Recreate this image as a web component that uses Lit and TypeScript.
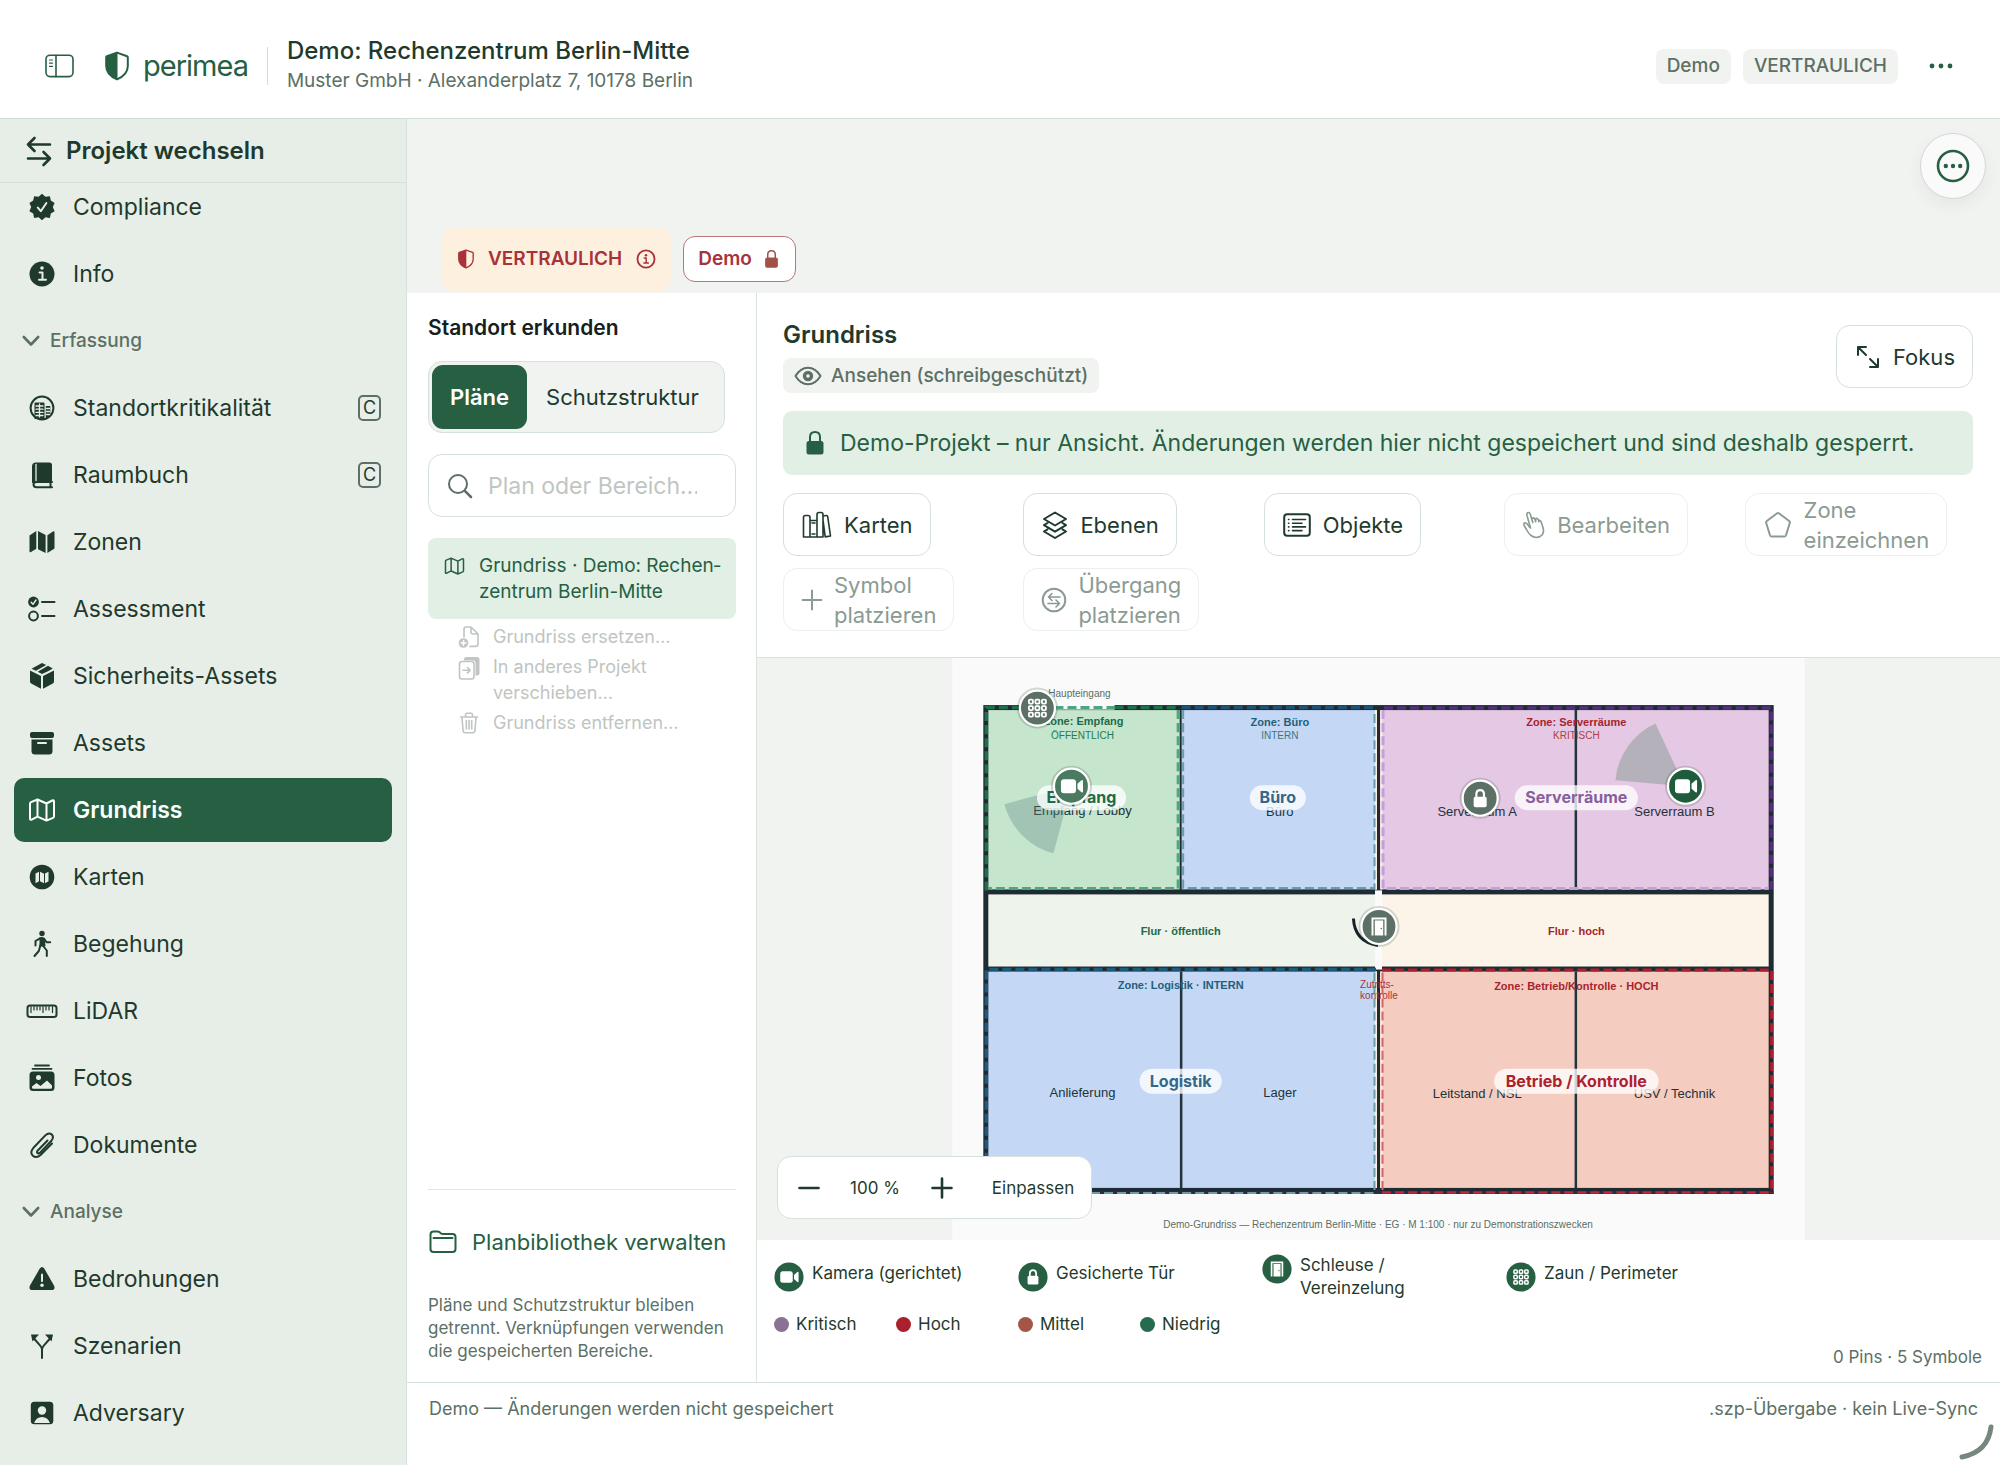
import { LitElement, html, svg, css, nothing, SVGTemplateResult } from "lit";
import { customElement, property } from "lit/decorators.js";
import { classMap } from "lit/directives/class-map.js";

type Glyph = { w: number; h: number; body: SVGTemplateResult };

const glyphs: Record<string, Glyph> = {
  sidebar: { w: 30, h: 24, body: svg`<rect x="2" y="1.2" width="27" height="21.4" rx="4" class="s"/><path class="s" d="M12 1.2v21.4"/><path class="t" d="M5.5 6h3M5.5 9.2h3M5.5 12.4h3"/>` },
  shield: { w: 24, h: 30, body: svg`<path class="m" d="M12 1.6 22 5.2a1.2 1.2 0 0 1 .8 1.2V15c0 6.6-5.2 11-10.8 13.4C6.400 26 1.200 21.600 1.200 15V6.400A1.200 1.200 0 0 1 2 5.200Z"/><path class="f" d="M12.500 1.500V28.300C6.400 26 1.200 21.600 1.200 15V6.400A1.200 1.200 0 0 1 2 5.200Z"/>` },
  swap: { w: 26, h: 30, body: svg`<path class="b" d="M24 8.500H2M8.500 2 2 8.500 8.500 15M2 22.500h22M17.500 16l6.500 6.500-6.500 6.500"/>` },
  seal: { w: 28, h: 28, body: svg`<path class="f" d="m14 .8 3.400 3 4.500-.6.9 4.400 3.800 2.400-1.800 4 1.800 4.200-3.800 2.300-.9 4.400-4.500-.6-3.400 3-3.400-3-4.500.6-.9-4.400-3.800-2.300L3.200 14l-1.800-4 3.800-2.400.9-4.400 4.500.6Z"/><path class="cut" d="m9.800 14.600 3 3.600 5.600-8.200"/>` },
  infoFill: { w: 28, h: 28, body: svg`<circle class="f" cx="14" cy="14" r="12.500"/><circle class="cf" cx="14" cy="8" r="1.800"/><path class="cut" d="M11.500 12.500H14.500V19.500M11 19.800h7"/>` },
  info: { w: 22, h: 22, body: svg`<circle class="m" cx="11" cy="11" r="9.400"/><circle class="f" cx="11" cy="6.800" r="1.400"/><path class="s" d="M9 10h2.200v5M8.600 15.300h5"/>` },
  chevron: { w: 18, h: 12, body: svg`<path class="b" d="m1.800 2 7.200 7.500L16.200 2"/>` },
  city: { w: 28, h: 28, body: svg`<circle class="m" cx="14" cy="14" r="11.400"/><path class="f" d="M6.500 9.500q0-1 1-1h8q1 0 1 1V25h-10ZM17.800 12h4.500v11l-4.500 2Z"/><path class="grid" d="M8 12h7M8 15.200h7M8 18.400h7M8 21.500h7M11.500 10v13M18.600 14.500h3M18.600 17.500h3M18.600 20.500h3"/>` },
  book: { w: 28, h: 28, body: svg`<path class="f" d="M8 1.500h13.500q2.500 0 2.500 2.500v17H8q-2 0-2.300.8L4 22V5.500q0-4 4-4Z"/><path class="m" d="M24 21H8.500q-3 0-3 2.600 0 2.600 3 2.600H24M22.500 21v5"/><path class="grid" d="M8 3.500v16"/>` },
  mapFill: { w: 28, h: 28, body: svg`<path class="f" d="M1.500 7.500 8.300 3v17.800L3 24q-1.500.8-1.500-.8ZM10 3l7.600 4v18L10 21.200ZM19.400 7.200 25 3.500q1.500-.8 1.500.8v16.200l-7.100 4.600Z"/>` },
  map: { w: 28, h: 24, body: svg`<path class="m" d="M2 5.800q0-1.200 1-1.700L9.500 1.500l9 4 5.800-3q1.700-.7 1.700 1v14.700q0 1.100-1 1.600l-6.500 2.800-9-4-5.800 3q-1.700.7-1.700-1ZM9.500 1.700v16.700M18.500 5.500v17"/>` },
  checklist: { w: 30, h: 28, body: svg`<circle class="f" cx="6.500" cy="7" r="5.400"/><path class="cut thin" d="m4.200 7.300 1.800 2 3-4.300"/><circle class="m" cx="6.500" cy="21" r="4.400"/><path class="m" d="M15 7h12.500M15 21h12.500"/>` },
  box: { w: 28, h: 28, body: svg`<path class="f" d="m14 1 4.200 2L8 8.800 3.500 6.800ZM20 3.800l4.800 2.800L20 9.200 14 12l-4.300-2.200ZM2 8.600l11 5.400v12.800L3.200 21.500Q2 20.800 2 19.500ZM26 8.600 15 14v12.800l9.800-5.300q1.200-.7 1.200-2Z"/>` },
  archive: { w: 28, h: 28, body: svg`<rect class="f" x="2" y="3" width="24" height="6" rx="2"/><path class="f" d="M3.500 10.500h21V22q0 3.500-3.500 3.500H7q-3.500 0-3.500-3.500Z"/><path class="cut" d="M10 14h8"/>` },
  mapRound: { w: 28, h: 28, body: svg`<circle class="f" cx="14" cy="14" r="12.300"/><path class="cf" d="M7.500 10.500 11 8.700v9.600l-3.500 1.900ZM12 8.700l4 2v9.600l-4-2ZM17 10.600l3.500-1.900v9.600L17 20.200Z"/>` },
  walk: { w: 28, h: 28, body: svg`<circle class="f" cx="14" cy="3.500" r="2.700"/><path class="f" d="M11.500 7.500q3-1.500 5 .8l1 8-6 .5Z"/><path class="m" d="M12 8.300 7.500 11v4.500M16 8.500l2.500 3.700h3.700M12.500 15l-1.700 6L6.500 26M14.800 15.500l4 5V26"/>` },
  ruler: { w: 32, h: 28, body: svg`<rect class="m" x="1.500" y="8.500" width="29" height="11.500" rx="2.500"/><path class="t" d="M5 9.500v6M8 9.500v3.500M11 9.500v3.500M14 9.500v3.500M17 9.500v6M20 9.500v3.500M23 9.500v3.500M26.500 9.500v6"/>` },
  photos: { w: 28, h: 28, body: svg`<path class="t2" d="M7 1.500h14M4.500 4.800h19"/><rect class="f" x="1.500" y="7.500" width="25" height="19.500" rx="3.500"/><circle class="cf" cx="10.500" cy="13.500" r="2.500"/><path class="cf" d="M4 22.500 8.500 19l4 3 6.500-5.500 5 5v2q0 1.300-1.300 1.300H5.300Q4 24.800 4 23.500Z"/>` },
  clip: { w: 28, h: 28, body: svg`<path class="m" d="M19.500 9.500 10 19.200q-1.800 1.800-.4 2.900 1.200.8 2.700-.7L23.200 10q3.200-3.600.6-6.500-3-2.500-6.500.9L5.500 16.800q-4 4.500-.7 8 3.700 3 8-1L24 12.500"/>` },
  warn: { w: 28, h: 28, body: svg`<path class="f" d="M11.600 3.800q2.400-3.600 4.800 0L26 20.500q1.800 4.200-2.500 4.500h-19Q.2 24.700 2 20.500Z"/><path class="cut" d="M14 9.500v6.500"/><circle class="cf" cx="14" cy="20.200" r="1.700"/>` },
  fork: { w: 28, h: 28, body: svg`<path class="m" d="M14 26v-8.500q0-2-2-4.200L6 6.500M14 17.500q0-2 2-4.200l6-6.800"/><path class="f" d="M3 2.500h8L4.500 9.500ZM25 2.500h-8l6.500 7Z"/>` },
  person: { w: 28, h: 28, body: svg`<rect class="f" x="2.800" y="2.800" width="22.500" height="22.500" rx="3.500"/><circle class="cf" cx="14" cy="11.500" r="4.200"/><path class="cf" d="M6 24q2.300-6 8-6t8 6Z"/>` },
  search: { w: 26, h: 26, body: svg`<circle class="m" cx="11" cy="11" r="9"/><path class="b" d="m17.800 17.800 6.200 6.200"/>` },
  docAdd: { w: 22, h: 22, body: svg`<path class="s" d="M6 11V3q0-2 2-2h5l7 7v10q0 2.400-2.400 2.400H12M13 1v5q0 2 2 2h5"/><circle class="f" cx="5.500" cy="17" r="4.800"/><path class="wc" d="M5.500 14.500v5M3 17h5"/>` },
  docMove: { w: 22, h: 24, body: svg`<path class="f" d="M6 3.500Q6 1 8.500 1H19q2.500 0 2.500 2.500V17q0 2.500-2.500 2.500h-1.500V7q0-2.500-2.500-2.500H6Z"/><rect class="s" x="1.500" y="5.500" width="14.500" height="17.500" rx="2.500"/><path class="s" d="M5 14.200h7M9.500 11.500l2.700 2.700-2.700 2.700"/>` },
  trash: { w: 22, h: 22, body: svg`<path class="s" d="M2.500 5h17M7.500 4.800V3q0-1.700 1.700-1.700h3.600q1.700 0 1.700 1.700v1.800M4 5.200l1 13.300q.2 2.200 2.400 2.200h7.200q2.200 0 2.400-2.200L18 5.200M8.300 8.500V17M11 8.500V17M13.700 8.500V17"/>` },
  folder: { w: 28, h: 24, body: svg`<path class="m" d="M1.500 4.500q0-3 3-3h4q1.300 0 2.200.8l1 .9q.9.800 2.200.800h9.600q3 0 3 3V19q0 3-3 3h-19q-3 0-3-3ZM4.500 8h19"/>` },
  eye: { w: 28, h: 20, body: svg`<path class="m" d="M1.500 10Q6.500 1.700 14 1.700T26.500 10Q21.500 18.300 14 18.300T1.500 10Z"/><circle class="ring" cx="14" cy="10" r="3.500"/>` },
  lock: { w: 20, h: 26, body: svg`<rect class="f" x="1.500" y="11" width="17" height="13.500" rx="2.500"/><path class="m" d="M5 11V7q0-5 5-5t5 5v4"/>` },
  expand: { w: 26, h: 26, body: svg`<path class="m" d="m3 3 8 8M3 11V3h8M23 23l-8-8M23 15v8h-8"/>` },
  books: { w: 30, h: 28, body: svg`<path class="s" d="M1.500 26V6.500q0-2 2-2H6q2 0 2 2V26ZM8 9.500h7V26M1.500 26h19.300M15 26V3.500q0-2 2-2h2q2 0 2 2V26M21 5l3.200-.5q1.300-.1 1.500 1.200L28.500 25l-5.300.9L21 9M10 12h3M10 23h3"/>` },
  layers: { w: 26, h: 28, body: svg`<path class="m" d="m13 1.500 11 6.500-11 6.500L2 8ZM5.500 12 2 14.200l11 6.500 11-6.500L20.500 12M5.500 18.300 2 20.500 13 27l11-6.500-3.500-2.200"/>` },
  list: { w: 28, h: 24, body: svg`<rect class="m" x="1.200" y="1.200" width="25.600" height="21.600" rx="3"/><path class="s" d="M9.500 6.500h13M9.500 10.200h9.500M9.500 13.900h13M9.500 17.600h9.500M5.500 6.500h.4M5.500 10.200h.4M5.500 13.900h.4M5.500 17.600h.4"/>` },
  tap: { w: 22, h: 28, body: svg`<path class="s" d="M7.500 17 4 4.500Q3.500 2 5 1.600t2.300 1.600l2.500 8.300M9.800 11.500 9 8.500q0-1.500 1.300-1.600 1.200 0 1.700 1.500l.7 2.300M12.700 10l-.2-1.500q.2-1.200 1.300-1.100 1.200.2 1.600 1.600l.4 1.600M15.800 9.500q1.500-.6 2.200 1l2 6q1.700 6-2.500 8.700-5 2.800-9.500-.7-2.500-2-4.500-6-2.500-4-2.700-5.300 0-1.400 1.500-1.400 1.700.3 2.900 2.500Q6 16.200 7.500 17"/>` },
  pentagon: { w: 28, h: 28, body: svg`<path class="m" d="M12.800 2.500q1.200-.8 2.400 0l10 7.500q1 .8.600 2L22 24.300q-.4 1.200-1.700 1.200H7.700Q6.400 25.500 6 24.300L2.200 12q-.4-1.200.6-2Z"/>` },
  plus: { w: 20, h: 22, body: svg`<path class="m" d="M10 1.500v19M.5 11h19"/>` },
  minus: { w: 22, h: 22, body: svg`<path class="b" d="M1.500 11h19"/>` },
  plusBold: { w: 22, h: 22, body: svg`<path class="b" d="M11 1.500v19M1.500 11h19"/>` },
  exchange: { w: 24, h: 26, body: svg`<circle class="m" cx="12" cy="13" r="11.300"/><path class="s" d="M18 10H6.500M10 6.500 6.500 10l3.500 3.500M6 16.500h11.500M14 13l3.500 3.500L14 20"/>` },
  dots: { w: 24, h: 6, body: svg`<circle class="f" cx="3" cy="3" r="2.400"/><circle class="f" cx="12" cy="3" r="2.400"/><circle class="f" cx="21" cy="3" r="2.400"/>` },
  more: { w: 34, h: 34, body: svg`<circle class="b" cx="17" cy="17" r="15"/><circle class="f" cx="9.800" cy="17" r="2.200"/><circle class="f" cx="17" cy="17" r="2.200"/><circle class="f" cx="24.200" cy="17" r="2.200"/>` },
};

const icon = (name: string) => {
  const g = glyphs[name];
  return html`<svg class="ic" width=${g.w} height=${g.h} viewBox="0 0 ${g.w} ${g.h}" aria-hidden="true">${g.body}</svg>`;
};

/* White marks drawn inside the round plan symbols, centred on 0,0. */
const marks: Record<string, SVGTemplateResult> = {
  camera: svg`<rect x="-10.500" y="-7" width="15" height="14" rx="3" fill="#fff"/><path d="m6 -2.500 4-3.500q1.500-.6 1.500 1v10q0 1.600-1.500 1L6 2.500Z" fill="#fff"/>`,
  lock: svg`<rect x="-6.500" y="-1.500" width="13" height="10.500" rx="1.800" fill="#fff"/><path d="M-3.800 -1v-3q0-4.200 3.800-4.200T3.800 -4v3" fill="none" stroke="#fff" stroke-width="2.200"/>`,
  door: svg`<path d="M-6.500 9V-8h13V9" fill="none" stroke="#fff" stroke-width="2"/><rect x="-4.200" y="-6" width="8.400" height="15" fill="#fff"/><circle cx="2.300" cy="2" r=".8" fill="#5c7065"/>`,
  fence: svg`${[-6.5, 0, 6.5].map((y) => [-6.5, 0, 6.5].map((x) => svg`<rect x=${x - 2} y=${y - 2} width="4" height="4" rx="1" fill="none" stroke="#fff" stroke-width="1.800"/>`))}`,
};

const iconCss = css`
  .ic { display: block; flex: none; fill: none; stroke: none; overflow: visible; }
  .ic * { stroke-linecap: round; stroke-linejoin: round; }
  .ic .f { fill: currentColor; }
  .ic .s { stroke: currentColor; stroke-width: 1.6px; }
  .ic .m { stroke: currentColor; stroke-width: 2px; }
  .ic .b { stroke: currentColor; stroke-width: 2.6px; }
  .ic .t { stroke: currentColor; stroke-width: 1.2px; }
  .ic .t2 { stroke: currentColor; stroke-width: 1.8px; }
  .ic .ring { stroke: currentColor; stroke-width: 3.4px; }
  .ic .cut { stroke: var(--cut, #e7eee7); stroke-width: 2px; }
  .ic .thin { stroke-width: 1.4px; }
  .ic .cf { fill: var(--cut, #e7eee7); }
  .ic .grid { stroke: var(--cut, #e7eee7); stroke-width: 1.3px; }
  .ic .wc { stroke: #fff; stroke-width: 1.6px; }
`;

const base = css`
  * { box-sizing: border-box; }
  button, input { font: inherit; color: inherit; margin: 0; }
  button { background: none; border: 0; padding: 0; cursor: pointer; text-align: left; }
  a { color: inherit; text-decoration: none; }
  h1, h2, p, ul { margin: 0; padding: 0; font-weight: inherit; }
  ul { list-style: none; }
`;

@customElement("side-nav")
export class SideNav extends LitElement {
  static styles = [base, iconCss, css`
    :host { display: flex; flex-direction: column; overflow: hidden; background: #e7eee7; border-right: 1px solid #d5e1da; color: #1f3a2d; }
    .switch { display: flex; align-items: center; gap: 14px; flex: none; height: 64px; padding: 0 0 0 26px; background: #e7eee7; border-bottom: 1px solid #d5e1da; font-weight: 600; font-size: 24px; position: relative; z-index: 1; }
    .list { display: flex; flex-direction: column; gap: 3px; margin-top: -8px; padding: 0 14px; }
    .item { display: flex; align-items: center; height: 64px; padding: 0 11px 0 12px; gap: 15px; border-radius: 10px; font-size: 23px; }
    .slot { display: flex; justify-content: center; width: 32px; }
    .name { flex: 1; }
    .on { background: #265f42; color: #fff; font-weight: 600; --cut: #265f42; }
    .group { display: flex; align-items: center; gap: 10px; width: 100%; height: 64px; padding-left: 8px; color: #5c7065; font-size: 19px; font-weight: 500; }
    .key { display: flex; align-items: center; justify-content: center; width: 23px; height: 26px; border: 2px solid #5c7065; border-radius: 5px; font-size: 18px; line-height: 18px; }
  `];

  private rows: [string, string?, string?][] = [
    ["Compliance", "seal"], ["Info", "infoFill"],
    ["Erfassung"],
    ["Standortkritikalität", "city", "C"], ["Raumbuch", "book", "C"], ["Zonen", "mapFill"], ["Assessment", "checklist"],
    ["Sicherheits-Assets", "box"], ["Assets", "archive"], ["Grundriss", "map"], ["Karten", "mapRound"], ["Begehung", "walk"],
    ["LiDAR", "ruler"], ["Fotos", "photos"], ["Dokumente", "clip"],
    ["Analyse"],
    ["Bedrohungen", "warn"], ["Szenarien", "fork"], ["Adversary", "person"],
  ];

  render() {
    return html`
      <button class="switch">${icon("swap")}<span>Projekt wechseln</span></button>
      <ul class="list">
        ${this.rows.map(([name, ic, key]) => html`<li>${ic
          ? html`<a href="#" class=${classMap({ item: true, on: name === "Grundriss" })}>
              <span class="slot">${icon(ic)}</span><span class="name">${name}</span>${key ? html`<span class="key">${key}</span>` : nothing}</a>`
          : html`<button class="group">${icon("chevron")}<span>${name}</span></button>`}</li>`)}
      </ul>`;
  }
}

@customElement("plan-symbol")
export class PlanSymbol extends LitElement {
  @property() kind = "camera";
  static styles = css`
    :host { display: block; flex: none; width: 30px; height: 30px; }
    svg { display: block; width: 100%; height: 100%; }
  `;
  render() {
    return html`<svg viewBox="-18 -18 36 36" aria-hidden="true"><circle r="17.500" fill="#265f42"/>${marks[this.kind]}</svg>`;
  }
}

@customElement("floor-plan")
export class FloorPlan extends LitElement {
  static styles = css`
    :host { display: flex; min-height: 0; }
    .plan { flex: 1; min-height: 0; min-width: 0; font-family: "Liberation Sans", Arial, sans-serif; }
    .plan text { text-anchor: middle; dominant-baseline: central; }
    .wall { fill: #1f2b33; }
    .dash { fill: none; stroke-dasharray: 9 4; }
    .room { font-size: 13px; fill: #22323a; }
    .zone { font-size: 11px; font-weight: 700; }
    .level { font-size: 10px; }
    .small { font-size: 10px; fill: #5a6e64; }
    .pill { fill: #fff; fill-opacity: 0.78; }
    .tag { font-family: Inter, "Liberation Sans", sans-serif; font-size: 16px; font-weight: 700; }
  `;

  private dash(d: string, color: string, width: number) {
    return svg`<path class="dash" d=${d} stroke=${color} stroke-width=${width}/>`;
  }
  private label(cls: string, x: number, y: number, color: string, text: string) {
    return svg`<text class=${cls} x=${x} y=${y} fill=${color}>${text}</text>`;
  }
  private tag(x: number, y: number, w: number, color: string, text: string) {
    return svg`<rect class="pill" x=${x - w / 2} y=${y - 12} width=${w} height="25" rx="12.500"/><text class="tag" x=${x} y=${y} fill=${color}>${text}</text>`;
  }
  private pin(x: number, y: number, color: string, kind: string) {
    return svg`<g transform="translate(${x} ${y})"><circle r="20.500" fill="#3c5046" opacity=".22"/><circle r="17.500" fill=${color} stroke="#fff" stroke-width="2.200"/>${marks[kind]}</g>`;
  }

  render() {
    return html`<svg class="plan" viewBox="953 658 851 581" role="img" aria-label="Grundriss Rechenzentrum Berlin-Mitte">
      <rect x="953" y="658" width="851" height="581" fill="#fafafa"/>
      <rect class="wall" x="984" y="705" width="789" height="488"/>
      <rect x="989" y="710" width="191" height="179" fill="#c6e5cd"/>
      <rect x="1182" y="710" width="195" height="179" fill="#c4d8f5"/>
      <rect x="1380" y="710" width="388" height="179" fill="#e4c8e4"/>
      <rect x="989" y="894" width="388" height="72" fill="#eef3ec"/>
      <rect x="1380" y="894" width="388" height="72" fill="#fcf4e8"/>
      <rect x="989" y="971" width="388" height="216" fill="#c4d8f5"/>
      <rect x="1380" y="971" width="388" height="216" fill="#f5cdc0"/>
      <path d="M1376 710v179M1376 971v216M1381.500 710v179M1381.500 971v216" stroke="#fbeee2" stroke-width="2"/>
      <path d="M1575.500 710v179M1181.500 971v216M1575.500 971v216" stroke="#24343c" stroke-width="2.500"/>
      <rect x="1055" y="704" width="60" height="5.500" fill="#fafafa"/>
      <rect x="984" y="1190" width="789" height="3" fill="#2b2b48"/>
      <rect x="1375" y="890" width="7" height="79" fill="#fafafa"/>

      ${this.dash("M987 890V707.500H1055M1115 707.500H1180", "#1d7049", 3.5)}
      ${this.dash("M1178.500 710V888H989", "#4fa57d", 3)}
      ${this.dash("M1055 707.500h60", "#4fa57d", 3)}
      ${this.dash("M1182 707.500H1376", "#1d5277", 3.5)}
      ${this.dash("M1183.500 710V887.500H1374.500V710", "#6a9ba6", 2)}
      ${this.dash("M1384 708H1770.500V889", "#52307c", 3.5)}
      ${this.dash("M1383 710V888H1768", "#c1a0dc", 3)}
      ${this.dash("M1376 969H987V1190", "#1d5a80", 3.5)}
      ${this.dash("M1374.500 972V1192H987", "#6b9fa4", 2)}
      ${this.dash("M1382 969.500H1771V1192", "#b0202c", 3)}
      ${this.dash("M1382.500 972V1190", "#d3646c", 2)}
      ${this.dash("M1382 1191.500H1770", "#bd2a35", 2.5)}

      ${this.label("small", 1080, 693, "", "Haupteingang")}
      ${this.label("zone", 1084, 721, "#1f6b48", "Zone: Empfang")}
      ${this.label("level", 1083, 735, "#1f7a50", "ÖFFENTLICH")}
      ${this.label("zone", 1280, 722, "#22607a", "Zone: Büro")}
      ${this.label("level", 1280, 735, "#3f7480", "INTERN")}
      ${this.label("zone", 1576, 722, "#a8242d", "Zone: Serverräume")}
      ${this.label("level", 1576, 735, "#b04040", "KRITISCH")}
      ${this.label("zone", 1181, 931, "#216b45", "Flur · öffentlich")}
      ${this.label("zone", 1576, 931, "#a8242d", "Flur · hoch")}
      ${this.label("zone", 1181, 984, "#22607a", "Zone: Logistik · INTERN")}
      ${this.label("zone", 1576, 985, "#a8242d", "Zone: Betrieb/Kontrolle · HOCH")}
      ${this.label("level", 1377, 984, "#a8343d", "Zutritts-")}
      ${this.label("level", 1379, 995, "#a8343d", "kontrolle")}
      ${this.label("room", 1083, 810, "", "Empfang / Lobby")}
      ${this.label("room", 1280, 811, "", "Büro")}
      ${this.label("room", 1477, 811, "", "Serverraum A")}
      ${this.label("room", 1674, 811, "", "Serverraum B")}
      ${this.label("room", 1083, 1092, "", "Anlieferung")}
      ${this.label("room", 1280, 1092, "", "Lager")}
      ${this.label("room", 1477, 1093, "", "Leitstand / NSL")}
      ${this.label("room", 1674, 1093, "", "USV / Technik")}
      ${this.label("small", 1378, 1224, "", "Demo-Grundriss — Rechenzentrum Berlin-Mitte · EG · M 1:100 · nur zu Demonstrationszwecken")}

      <path d="M1072 786 1005 804A69 69 0 0 0 1054 853Z" fill="#5c8687" opacity=".35"/>
      <path d="M1684 786 1615 780A69 69 0 0 1 1655 723.500Z" fill="#5c8670" opacity=".35"/>
      <path d="M1353.500 918Q1354.500 941 1378 945" fill="none" stroke="#13222a" stroke-width="3"/>

      ${this.tag(1082, 797, 89, "#1f6b48", "Empfang")}
      ${this.tag(1278, 797, 56, "#33688a", "Büro")}
      ${this.tag(1576, 797, 123, "#86609c", "Serverräume")}
      ${this.tag(1181, 1080, 82, "#33688a", "Logistik")}
      ${this.tag(1576, 1080, 164, "#b0202c", "Betrieb / Kontrolle")}

      ${this.pin(1038, 708, "#5c7065", "fence")}
      ${this.pin(1072, 786, "#4a7a5f", "camera")}
      ${this.pin(1480, 798, "#5c7065", "lock")}
      ${this.pin(1379, 926, "#5c7065", "door")}
      ${this.pin(1685, 786, "#1f5c3d", "camera")}
    </svg>`;
  }
}

@customElement("app-root")
export class AppRoot extends LitElement {
  static styles = [base, iconCss, css`
    :host { display: flex; flex-direction: column; height: 100vh; min-height: 1200px; overflow: hidden; background: #fff; color: #1f3a2d; font-family: Inter, "Liberation Sans", sans-serif; font-size: 23px; line-height: 30px; }
    .green { color: #265f42; }
    .muted { color: #5c7065; }

    .top { display: flex; align-items: center; flex: none; height: 119px; padding: 14px 47px 0 44px; border-bottom: 1px solid #d0e0d7; }
    .brand { display: flex; align-items: center; gap: 14px; margin-left: 31px; padding-right: 19px; color: #265f42; font-size: 29px; letter-spacing: -1px; }
    .project { flex: 1; display: flex; flex-direction: column; justify-content: center; }
    .rule { width: 1px; height: 38px; margin-right: 19px; background: #d0dfd6; }
    .title { font-size: 24px; font-weight: 600; line-height: 30px; }
    .top .title { font-weight: 500; }
    .sub { font-size: 19px; line-height: 30px; }
    .chip { display: flex; align-items: center; gap: 9px; height: 35px; padding: 0 11px; border-radius: 8px; background: #f1f3f0; color: #5c7065; font-size: 19px; font-weight: 500; }
    .chips { display: flex; gap: 12px; margin-right: 31px; }

    .body { flex: 1; min-height: 0; display: flex; }
    side-nav { flex: none; width: 407px; }
    .main { flex: 1; min-width: 0; display: flex; flex-direction: column; position: relative; }
    .bar { flex: none; display: flex; align-items: flex-end; height: 174px; padding: 0 35px 2px; background: #f1f3f0; }
    .badges { display: flex; align-items: center; gap: 12px; font-size: 19px; font-weight: 600; color: #a8323a; }
    .conf { display: flex; align-items: center; gap: 14px; height: 64px; padding: 0 15px 0 16px; border-radius: 12px; background: #fef0df; }
    .conf .ic { height: 20px; width: auto; }
    .demo { display: flex; align-items: center; gap: 12px; height: 46px; padding: 0 16px 0 14px; border: 1px solid #b9777a; border-radius: 12px; background: #fff; }
    .demo .ic { height: 20px; width: 15px; color: #a35048; }
    .float { position: absolute; top: 14px; right: 14px; display: grid; place-items: center; width: 66px; height: 66px; border-radius: 50%; border: 1px solid #d3d8d4; background: #f9faf9; color: #265f42; box-shadow: 0 6px 16px rgba(30, 50, 40, 0.06); }

    .work { flex: 1; min-height: 0; display: flex; }
    .explore { flex: none; width: 350px; display: flex; flex-direction: column; padding: 21px 20px 19px 21px; border-right: 1px solid #d9e4dd; }
    .heading { font-size: 21px; font-weight: 600; line-height: 28px; color: #15201b; }
    .seg { align-self: flex-start; display: flex; height: 72px; margin-top: 19px; padding: 3px; border: 1px solid #d5e1da; border-radius: 14px; background: #f1f3f0; font-size: 22px; }
    .seg button { padding: 0 22px 0 19px; border-radius: 11px; white-space: nowrap; }
    .seg .on { padding: 0 18px; background: #265f42; color: #fff; font-weight: 600; }
    .find { display: flex; align-items: center; gap: 15px; height: 63px; margin-top: 21px; padding: 0 18px; border: 1px solid #d5e1da; border-radius: 14px; color: #5c7065; }
    .find input { flex: 1; min-width: 0; border: 0; outline: 0; background: none; padding: 0; }
    .find input::placeholder { color: #bfc6c2; opacity: 1; }
    .plan { display: flex; gap: 14px; margin-top: 21px; padding: 15px 4px 14px 16px; border-radius: 8px; background: #e2efe5; font-size: 19px; line-height: 26px; color: #265f42; }
    .plan .ic { width: 21px; height: 18px; margin-top: 4px; }
    .acts { display: flex; flex-direction: column; gap: 4px; padding: 5px 0 0 30px; font-size: 18px; line-height: 26px; color: #bfc5c1; }
    .acts button { display: flex; gap: 13px; color: inherit; }
    .acts .ic { margin-top: 2px; }
    .foot { margin-top: auto; padding-top: 20px; border-top: 1px solid #dfe7e2; }
    .lib { display: flex; align-items: center; gap: 15px; height: 64px; padding-left: 1px; color: #265f42; font-size: 22px; white-space: nowrap; }
    .note { margin-top: 20px; font-size: 17px; line-height: 23px; }

    .view { flex: 1; min-width: 0; display: flex; flex-direction: column; }
    .tools { padding: 27px 27px 26px 26px; border-bottom: 1px solid #d5e1da; }
    .head { display: flex; justify-content: space-between; align-items: center; }
    .head .title { margin-bottom: 8px; }
    .btn { display: flex; align-items: center; gap: 12px; height: 63px; padding: 0 17px 0 18px; border: 1px solid #d5e1da; border-radius: 14px; background: #fff; font-size: 22px; }
    .btn[disabled] { color: #8b9b92; border-color: #eaf0ec; cursor: default; }
    .banner { display: flex; align-items: center; gap: 15px; height: 64px; margin-top: 18px; padding: 0 22px; border-radius: 9px; background: #e2efe5; color: #265f42; }
    .grid { display: grid; grid-template-columns: repeat(5, minmax(0, 1fr)); gap: 12px; margin-top: 18px; justify-items: start; }
    .wrap { width: min-content; }
    .canvas { flex: 1; min-height: 0; display: flex; position: relative; background: #f1f3f0; }
    floor-plan { flex: 1; }
    .zoom { position: absolute; left: 20px; bottom: 21px; display: flex; align-items: center; height: 63px; padding: 0 17px 0 20px; border: 1px solid #d5e1da; border-radius: 14px; background: #fff; font-size: 17px; }
    .pct { margin: 0 31px 0 30px; }
    .fit { margin-left: 39px; }
    .legend { padding: 14px 18px 13px 17px; font-size: 17px; line-height: 23px; }
    .syms { display: grid; grid-template-columns: repeat(5, 244px); align-items: center; min-height: 46px; }
    .sym { display: flex; align-items: flex-start; gap: 8px; padding-right: 70px; }
    .one { padding-right: 0; white-space: nowrap; }
    .risks { display: grid; grid-template-columns: repeat(4, 122px); margin-top: 13px; }
    .risk { display: flex; align-items: center; gap: 7px; }
    .dot { width: 15px; height: 15px; border-radius: 50%; }
    .critical { background: #8b7292; }
    .high { background: #aa202c; }
    .medium { background: #a35648; }
    .low { background: #256b50; }
    .count { margin-top: 10px; text-align: right; }
    .status { flex: none; display: flex; justify-content: space-between; height: 83px; padding: 12px 22px; border-top: 1px solid #d5e1da; font-size: 18px; line-height: 28px; }
    .arc { position: absolute; right: 5px; bottom: 4px; }
  `];

  private tool(ic: string, label: string, disabled = false, wrap = false) {
    return html`<button class="btn" ?disabled=${disabled}>${icon(ic)}<span class=${wrap ? "wrap" : ""}>${label}</span></button>`;
  }

  private symbol(kind: string, label: string, oneLine = true) {
    return html`<div class=${classMap({ sym: true, one: oneLine })}><plan-symbol kind=${kind}></plan-symbol><span>${label}</span></div>`;
  }

  render() {
    return html`
      <header class="top">
        <button class="green" aria-label="Seitenleiste">${icon("sidebar")}</button>
        <a class="brand" href="#">${icon("shield")}<span>perimea</span></a>
        <span class="rule"></span>
        <div class="project">
          <h1 class="title">Demo: Rechenzentrum Berlin-Mitte</h1>
          <p class="sub muted">Muster GmbH · Alexanderplatz 7, 10178 Berlin</p>
        </div>
        <div class="chips"><span class="chip">Demo</span><span class="chip">VERTRAULICH</span></div>
        <button class="green" aria-label="Mehr">${icon("dots")}</button>
      </header>
      <div class="body">
        <side-nav></side-nav>
        <main class="main">
          <div class="bar">
            <div class="badges">
              <button class="conf">${icon("shield")}<span>VERTRAULICH</span>${icon("info")}</button>
              <span class="demo">Demo ${icon("lock")}</span>
            </div>
          </div>
          <button class="float" aria-label="Weitere Aktionen">${icon("more")}</button>
          <div class="work">
            <section class="explore">
              <h2 class="heading">Standort erkunden</h2>
              <div class="seg"><button class="on">Pläne</button><button>Schutzstruktur</button></div>
              <label class="find">${icon("search")}<input type="search" placeholder="Plan oder Bereich…" aria-label="Plan oder Bereich"></label>
              <a class="plan" href="#">${icon("map")}<span>Grundriss · Demo: Rechen&shy;zentrum Berlin-Mitte</span></a>
              <div class="acts">
                <button disabled>${icon("docAdd")}<span>Grundriss ersetzen…</span></button>
                <button disabled>${icon("docMove")}<span>In anderes Projekt verschieben…</span></button>
                <button disabled>${icon("trash")}<span>Grundriss entfernen…</span></button>
              </div>
              <div class="foot">
                <a class="lib" href="#">${icon("folder")}<span>Planbibliothek verwalten</span></a>
                <p class="note muted">Pläne und Schutzstruktur bleiben getrennt. Verknüpfungen verwenden die gespeicherten Bereiche.</p>
              </div>
            </section>
            <section class="view">
              <div class="tools">
                <div class="head">
                  <div>
                    <h2 class="title">Grundriss</h2>
                    <span class="chip">${icon("eye")}Ansehen (schreibgeschützt)</span>
                  </div>
                  ${this.tool("expand", "Fokus")}
                </div>
                <p class="banner">${icon("lock")}<span>Demo-Projekt – nur Ansicht. Änderungen werden hier nicht gespeichert und sind deshalb gesperrt.</span></p>
                <div class="grid">
                  ${this.tool("books", "Karten")}
                  ${this.tool("layers", "Ebenen")}
                  ${this.tool("list", "Objekte")}
                  ${this.tool("tap", "Bearbeiten", true)}
                  ${this.tool("pentagon", "Zone einzeichnen", true, true)}
                  ${this.tool("plus", "Symbol platzieren", true, true)}
                  ${this.tool("exchange", "Übergang platzieren", true, true)}
                </div>
              </div>
              <div class="canvas">
                <floor-plan></floor-plan>
                <div class="zoom">
                  <button aria-label="Verkleinern">${icon("minus")}</button>
                  <span class="pct">100 %</span>
                  <button aria-label="Vergrößern">${icon("plusBold")}</button>
                  <button class="fit">Einpassen</button>
                </div>
              </div>
              <div class="legend">
                <div class="syms">
                  ${this.symbol("camera", "Kamera (gerichtet)")}
                  ${this.symbol("lock", "Gesicherte Tür")}
                  ${this.symbol("door", "Schleuse / Vereinzelung", false)}
                  ${this.symbol("fence", "Zaun / Perimeter")}
                </div>
                <div class="risks">
                  ${[["critical", "Kritisch"], ["high", "Hoch"], ["medium", "Mittel"], ["low", "Niedrig"]].map(
                    ([cls, label]) => html`<span class="risk"><i class="dot ${cls}"></i>${label}</span>`)}
                </div>
                <p class="count muted">0 Pins · 5 Symbole</p>
              </div>
            </section>
          </div>
          <footer class="status muted"><span>Demo — Änderungen werden nicht gespeichert</span><span>.szp-Übergabe · kein Live-Sync</span></footer>
          <svg class="arc" width="38" height="38" viewBox="0 0 38 38" aria-hidden="true"><path d="M34 4Q31 29 5 34" fill="none" stroke="#76887e" stroke-width="5" stroke-linecap="round"/></svg>
        </main>
      </div>`;
  }
}
